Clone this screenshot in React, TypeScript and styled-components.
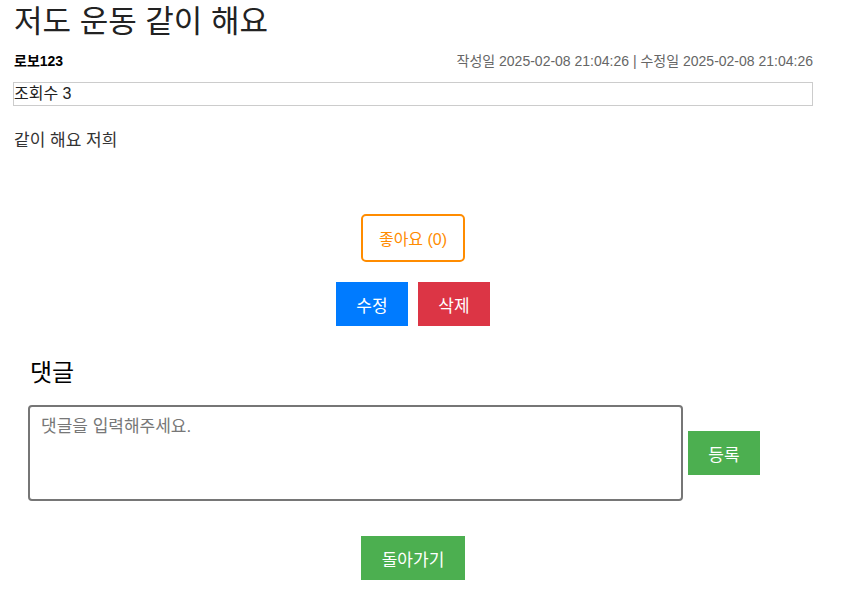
import React, { useState } from "react";
import styled, { createGlobalStyle } from "styled-components";

const GlobalStyle = createGlobalStyle`
  body {
    margin: 0;
    background: #fff;
    font-family: "Liberation Sans", "Noto Sans CJK KR", sans-serif;
  }
`;

const Page = styled.div`
  width: 800px;
  padding-left: 13px;
`;

const Title = styled.h1`
  margin: 0;
  padding-left: 1px;
  font-size: 31px;
  font-weight: 400;
  line-height: 44px;
  color: #222;
`;

const MetaRow = styled.div`
  display: flex;
  justify-content: space-between;
  align-items: center;
  margin-top: 8px;
  padding-left: 1px;
  font-size: 14px;
  line-height: 18px;
`;

const Author = styled.span`
  font-weight: 700;
  color: #000;
`;

const Dates = styled.span`
  color: #666;
`;

const ViewBox = styled.div`
  margin-top: 12px;
  height: 22px;
  border: 1px solid #ccc;
  font-size: 16px;
  line-height: 22px;
  color: #222;
`;

const Content = styled.p`
  margin: 25px 0 0;
  padding-left: 1px;
  font-size: 17px;
  line-height: 20px;
  color: #333;
`;

const Center = styled.div<{ $gap?: number; $top: number }>`
  display: flex;
  justify-content: center;
  gap: ${(p) => p.$gap ?? 0}px;
  margin-top: ${(p) => p.$top}px;
`;

const LikeButton = styled.button`
  width: 104px;
  height: 48px;
  padding: 0;
  border: 2px solid #ff8c00;
  border-radius: 5px;
  background: #fff;
  color: #ff8c00;
  font-family: inherit;
  font-size: 16px;
  cursor: pointer;
`;

const SolidButton = styled.button<{ $color: string; $width?: number }>`
  width: ${(p) => p.$width ?? 72}px;
  height: 44px;
  padding: 0;
  border: none;
  background: ${(p) => p.$color};
  color: #fff;
  font-family: inherit;
  font-size: 17px;
  cursor: pointer;
`;

const CommentSection = styled.section`
  padding-left: 15px;
`;

const CommentTitle = styled.h3`
  margin: 33px 0 0;
  padding-left: 2px;
  font-size: 24px;
  font-weight: 400;
  line-height: 28px;
  color: #000;
`;

const CommentRow = styled.div`
  display: flex;
  align-items: center;
  gap: 5px;
  margin-top: 18px;
`;

const CommentInput = styled.textarea`
  box-sizing: border-box;
  width: 655px;
  height: 96px;
  padding: 10px 11px;
  border: 2px solid #767676;
  border-radius: 4px;
  resize: none;
  font-family: inherit;
  font-size: 17px;
  line-height: 20px;
  color: #333;
  &::placeholder {
    color: #777;
  }
`;

export default function App() {
  const [likes, setLikes] = useState(0);
  const [comment, setComment] = useState("");

  return (
    <>
      <GlobalStyle />
      <Page>
        <Title>저도 운동 같이 해요</Title>
        <MetaRow>
          <Author>로보123</Author>
          <Dates>작성일 2025-02-08 21:04:26 | 수정일 2025-02-08 21:04:26</Dates>
        </MetaRow>
        <ViewBox>조회수 3</ViewBox>
        <Content>같이 해요 저희</Content>

        <Center $top={63}>
          <LikeButton onClick={() => setLikes(likes + 1)}>좋아요 ({likes})</LikeButton>
        </Center>
        <Center $top={20} $gap={10}>
          <SolidButton $color="#007bff">수정</SolidButton>
          <SolidButton $color="#dc3545">삭제</SolidButton>
        </Center>

        <CommentSection>
          <CommentTitle>댓글</CommentTitle>
          <CommentRow>
            <CommentInput
              placeholder="댓글을 입력해주세요."
              value={comment}
              onChange={(e) => setComment(e.target.value)}
            />
            <SolidButton $color="#4caf50">등록</SolidButton>
          </CommentRow>
        </CommentSection>

        <Center $top={35}>
          <SolidButton $color="#4caf50" $width={104}>
            돌아가기
          </SolidButton>
        </Center>
      </Page>
    </>
  );
}
